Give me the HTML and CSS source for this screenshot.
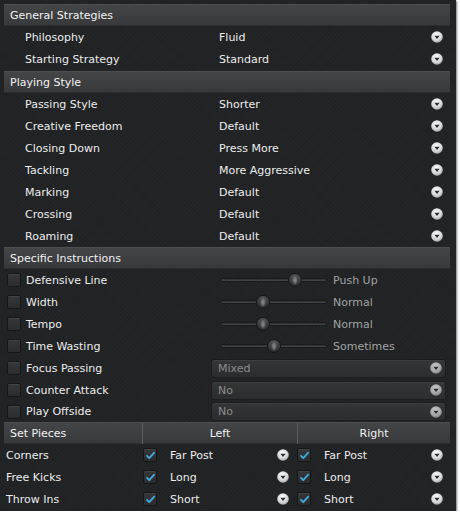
FILE: index.html
```html
<!DOCTYPE html>
<html>
<head>
<meta charset="utf-8">
<link rel="stylesheet" href="styles.css">
</head>
<body>
<svg width="0" height="0" class="defs">
  <defs>
    <radialGradient id="dg" cx="45%" cy="35%" r="70%">
      <stop offset="0" stop-color="#ffffff"/>
      <stop offset="0.6" stop-color="#d8d8d8"/>
      <stop offset="1" stop-color="#9a9a9a"/>
    </radialGradient>
    <radialGradient id="dgd" cx="45%" cy="35%" r="70%">
      <stop offset="0" stop-color="#c8c8c8"/>
      <stop offset="0.6" stop-color="#a8a8a8"/>
      <stop offset="1" stop-color="#7a7a7a"/>
    </radialGradient>
    <symbol id="dd" viewBox="0 0 12 12">
      <circle cx="6" cy="6" r="5.8" fill="url(#dg)"/>
      <path d="M3.4 4.7 H8.6 L6 8.1 Z" fill="#2a2c2e"/>
    </symbol>
    <symbol id="ddd" viewBox="0 0 12 12">
      <circle cx="6" cy="6" r="5.8" fill="url(#dgd)"/>
      <path d="M3.4 4.7 H8.6 L6 8.1 Z" fill="#2a2c2e"/>
    </symbol>
    <symbol id="chk" viewBox="0 0 13 13">
      <path d="M3 6.8 L5.3 9.2 L10.2 3.6" fill="none" stroke="#41a8e0" stroke-width="1.8" stroke-linecap="round" stroke-linejoin="round"/>
    </symbol>
  </defs>
</svg>
<div class="panel">
  <div class="hdr">General Strategies</div>
  <div class="row"><span class="lbl">Philosophy</span><span class="val">Fluid</span><svg class="ico"><use href="#dd"/></svg></div>
  <div class="row"><span class="lbl">Starting Strategy</span><span class="val">Standard</span><svg class="ico"><use href="#dd"/></svg></div>

  <div class="hdr gap">Playing Style</div>
  <div class="row"><span class="lbl">Passing Style</span><span class="val">Shorter</span><svg class="ico"><use href="#dd"/></svg></div>
  <div class="row"><span class="lbl">Creative Freedom</span><span class="val">Default</span><svg class="ico"><use href="#dd"/></svg></div>
  <div class="row"><span class="lbl">Closing Down</span><span class="val">Press More</span><svg class="ico"><use href="#dd"/></svg></div>
  <div class="row"><span class="lbl">Tackling</span><span class="val">More Aggressive</span><svg class="ico"><use href="#dd"/></svg></div>
  <div class="row"><span class="lbl">Marking</span><span class="val">Default</span><svg class="ico"><use href="#dd"/></svg></div>
  <div class="row"><span class="lbl">Crossing</span><span class="val">Default</span><svg class="ico"><use href="#dd"/></svg></div>
  <div class="row"><span class="lbl">Roaming</span><span class="val">Default</span><svg class="ico"><use href="#dd"/></svg></div>

  <div class="hdr">Specific Instructions</div>
  <div class="srow"><span class="cb"></span><span class="slbl">Defensive Line</span>
    <div class="slider"><div class="track"><span class="thumb" style="left:74px"></span></div><span class="stxt">Push Up</span></div></div>
  <div class="srow"><span class="cb"></span><span class="slbl">Width</span>
    <div class="slider"><div class="track"><span class="thumb" style="left:42px"></span></div><span class="stxt">Normal</span></div></div>
  <div class="srow"><span class="cb"></span><span class="slbl">Tempo</span>
    <div class="slider"><div class="track"><span class="thumb" style="left:42px"></span></div><span class="stxt">Normal</span></div></div>
  <div class="srow"><span class="cb"></span><span class="slbl">Time Wasting</span>
    <div class="slider"><div class="track"><span class="thumb" style="left:53px"></span></div><span class="stxt">Sometimes</span></div></div>
  <div class="srow"><span class="cb"></span><span class="slbl">Focus Passing</span>
    <div class="combo"><span class="ctxt">Mixed</span><svg class="ico"><use href="#ddd"/></svg></div></div>
  <div class="srow"><span class="cb"></span><span class="slbl">Counter Attack</span>
    <div class="combo"><span class="ctxt">No</span><svg class="ico"><use href="#ddd"/></svg></div></div>
  <div class="srow short"><span class="cb"></span><span class="slbl">Play Offside</span>
    <div class="combo"><span class="ctxt">No</span><svg class="ico"><use href="#ddd"/></svg></div></div>

  <div class="phdr">
    <div class="pc first">Set Pieces</div>
    <div class="pc mid">Left</div>
    <div class="pc last">Right</div>
  </div>
  <div class="prow">
    <span class="plbl">Corners</span>
    <div class="pcell"><span class="cb on"><svg><use href="#chk"/></svg></span><span class="ptxt">Far Post</span><svg class="ico"><use href="#dd"/></svg></div>
    <div class="pcell r"><span class="cb on"><svg><use href="#chk"/></svg></span><span class="ptxt">Far Post</span><svg class="ico"><use href="#dd"/></svg></div>
  </div>
  <div class="prow">
    <span class="plbl">Free Kicks</span>
    <div class="pcell"><span class="cb on"><svg><use href="#chk"/></svg></span><span class="ptxt">Long</span><svg class="ico"><use href="#dd"/></svg></div>
    <div class="pcell r"><span class="cb on"><svg><use href="#chk"/></svg></span><span class="ptxt">Long</span><svg class="ico"><use href="#dd"/></svg></div>
  </div>
  <div class="prow">
    <span class="plbl">Throw Ins</span>
    <div class="pcell"><span class="cb on"><svg><use href="#chk"/></svg></span><span class="ptxt">Short</span><svg class="ico"><use href="#dd"/></svg></div>
    <div class="pcell r"><span class="cb on"><svg><use href="#chk"/></svg></span><span class="ptxt">Short</span><svg class="ico"><use href="#dd"/></svg></div>
  </div>
</div>
</body>
</html>
```
FILE: styles.css
```css
html, body {
  margin: 0;
  padding: 0;
  background: #ffffff;
}
.defs {
  position: absolute;
  width: 0;
  height: 0;
}
.panel {
  width: 456px;
  height: 511px;
  box-sizing: border-box;
  padding-top: 4px;
  background-color: #212325;
  background-image:
    repeating-linear-gradient(45deg, rgba(255,255,255,0.012) 0 1px, transparent 1px 3px),
    repeating-linear-gradient(-45deg, rgba(0,0,0,0.05) 0 1px, transparent 1px 3px);
  box-shadow: 1px 1px 2px rgba(0,0,0,0.55);
  font-family: "DejaVu Sans", sans-serif;
  font-size: 11px;
  color: #ededed;
  overflow: hidden;
}
.hdr {
  margin: 0 6px 0 4px;
  height: 22px;
  box-sizing: border-box;
  line-height: 21px;
  padding-left: 6px;
  background: linear-gradient(#434547, #38393b);
  border-top: 1px solid #4c4e50;
  border-bottom: 1px solid #2c2d2f;
  color: #f2f2f2;
}
.gap {
  margin-top: 1px;
}
.row {
  height: 22px;
  display: flex;
  align-items: center;
}
.lbl {
  width: 194px;
  padding-left: 25px;
}
.val {
  flex: 1;
}
.ico {
  width: 12px;
  height: 12px;
  flex: none;
}
.row .ico {
  margin-right: 13px;
}
.srow {
  height: 22px;
  display: flex;
  align-items: center;
}
.srow.short {
  height: 21px;
}
.cb {
  width: 14px;
  height: 14px;
  box-sizing: border-box;
  flex: none;
  border-radius: 2px;
  background: linear-gradient(#35373a, #2a2c2e);
  border: 1px solid #161718;
  box-shadow: inset 0 1px 0 rgba(255,255,255,0.06);
  display: flex;
  align-items: center;
  justify-content: center;
}
.cb svg {
  width: 13px;
  height: 13px;
  flex: none;
}
.srow .cb {
  margin-left: 7px;
}
.slbl {
  width: 186px;
  padding-left: 5px;
}
.slider {
  display: flex;
  align-items: center;
  padding-left: 8px;
}
.track {
  position: relative;
  width: 107px;
  height: 4px;
  border-radius: 2px;
  background: linear-gradient(#2c2e30, #46484a);
  border: 1px solid #1a1b1c;
  box-sizing: border-box;
}
.thumb {
  position: absolute;
  top: -6px;
  width: 14px;
  height: 14px;
  margin-left: -7px;
  box-sizing: border-box;
  border-radius: 50%;
  background: radial-gradient(ellipse 3px 5px at 50% 50%, #8a8c8e 0, #66686a 60%, transparent 100%), linear-gradient(#4e5052, #2a2c2e);
  border: 1px solid #151617;
}
.stxt {
  margin-left: 6px;
  color: #a2a2a2;
}
.combo {
  width: 235px;
  height: 19px;
  box-sizing: border-box;
  margin-left: -1px;
  display: flex;
  align-items: center;
  border-radius: 3px;
  background: linear-gradient(#333537, #2b2d2f);
  border: 1px solid #1c1d1e;
  box-shadow: inset 0 1px 0 rgba(255,255,255,0.05);
}
.ctxt {
  flex: 1;
  padding-left: 6px;
  color: #8c8c8c;
}
.combo .ico {
  margin-right: 3px;
}
.phdr {
  margin-left: 4px;
  margin-right: 6px;
  height: 22px;
  box-sizing: border-box;
  display: grid;
  grid-template-columns: 138px 155px 1fr;
  background: linear-gradient(#434547, #38393b);
  border-top: 1px solid #4c4e50;
  border-bottom: 1px solid #2c2d2f;
  line-height: 21px;
  color: #f2f2f2;
}
.pc.first {
  padding-left: 6px;
}
.pc.mid, .pc.last {
  text-align: center;
  border-left: 1px solid #5a5c5e;
}
.prow {
  height: 22px;
  display: grid;
  grid-template-columns: 143px 155px 1fr;
  align-items: center;
}
.plbl {
  padding-left: 6px;
}
.pcell {
  display: flex;
  align-items: center;
}
.ptxt {
  flex: 1;
  padding-left: 13px;
}
.pcell .ico {
  margin-right: 9px;
}
.pcell.r .ico {
  margin-right: 13px;
}
.pcell.r .cb {
  margin-left: -1px;
}
```
